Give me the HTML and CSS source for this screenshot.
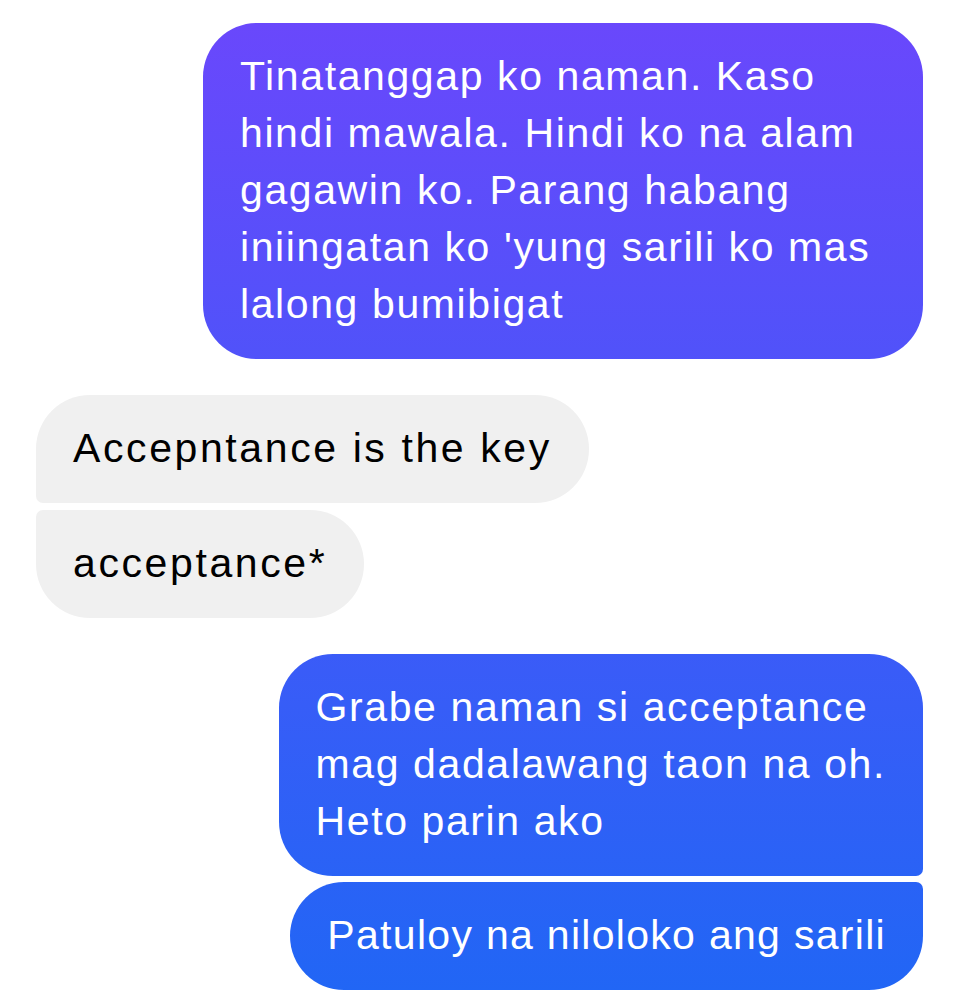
FILE: index.html
```html
<!DOCTYPE html>
<html>
<head>
<meta charset="utf-8">
<link rel="stylesheet" href="styles.css">
</head>
<body>
<div class="chat">
  <div class="group out">
    <div class="bubble sent single">Tinatanggap ko naman. Kaso hindi mawala. Hindi ko na alam gagawin ko. Parang habang iniingatan ko 'yung sarili ko mas lalong bumibigat</div>
  </div>
  <div class="group in">
    <div class="bubble recv first">Accepntance is the key</div>
    <div class="bubble recv last">acceptance*</div>
  </div>
  <div class="group out">
    <div class="bubble sent first">Grabe naman si acceptance<br>mag dadalawang taon na oh.<br>Heto parin ako</div>
    <div class="bubble sent last tight">Patuloy na niloloko ang sarili</div>
  </div>
</div>
</body>
</html>
```

FILE: styles.css
```css
html, body {
  margin: 0;
  padding: 0;
  background: #ffffff;
}
body {
  width: 960px;
  height: 992px;
  overflow: hidden;
  font-family: "Liberation Sans", Arial, sans-serif;
}
.chat {
  display: flex;
  flex-direction: column;
  gap: 36px;
  padding: 23px 37px 0 36px;
}
.group {
  display: flex;
  flex-direction: column;
  gap: 7px;
}
.group.out {
  align-items: flex-end;
  gap: 6px;
}
.group.in {
  align-items: flex-start;
}
.bubble {
  box-sizing: border-box;
  max-width: 720px;
  padding: 25px 37px 26px;
  font-size: 41px;
  line-height: 57px;
  letter-spacing: 1.6px;
  border-radius: 54px;
}
.sent {
  color: #ffffff;
  background: linear-gradient(to bottom, #6b47fc 0px, #2166f5 992px);
  background-attachment: fixed;
}
.recv {
  color: #000000;
  background: #f0f0f0;
  letter-spacing: 2.6px;
}
.tight {
  letter-spacing: 1.3px;
}
.sent.first {
  border-bottom-right-radius: 7px;
}
.sent.last {
  border-top-right-radius: 7px;
}
.recv.first {
  border-bottom-left-radius: 7px;
}
.recv.last {
  border-top-left-radius: 7px;
}
```
